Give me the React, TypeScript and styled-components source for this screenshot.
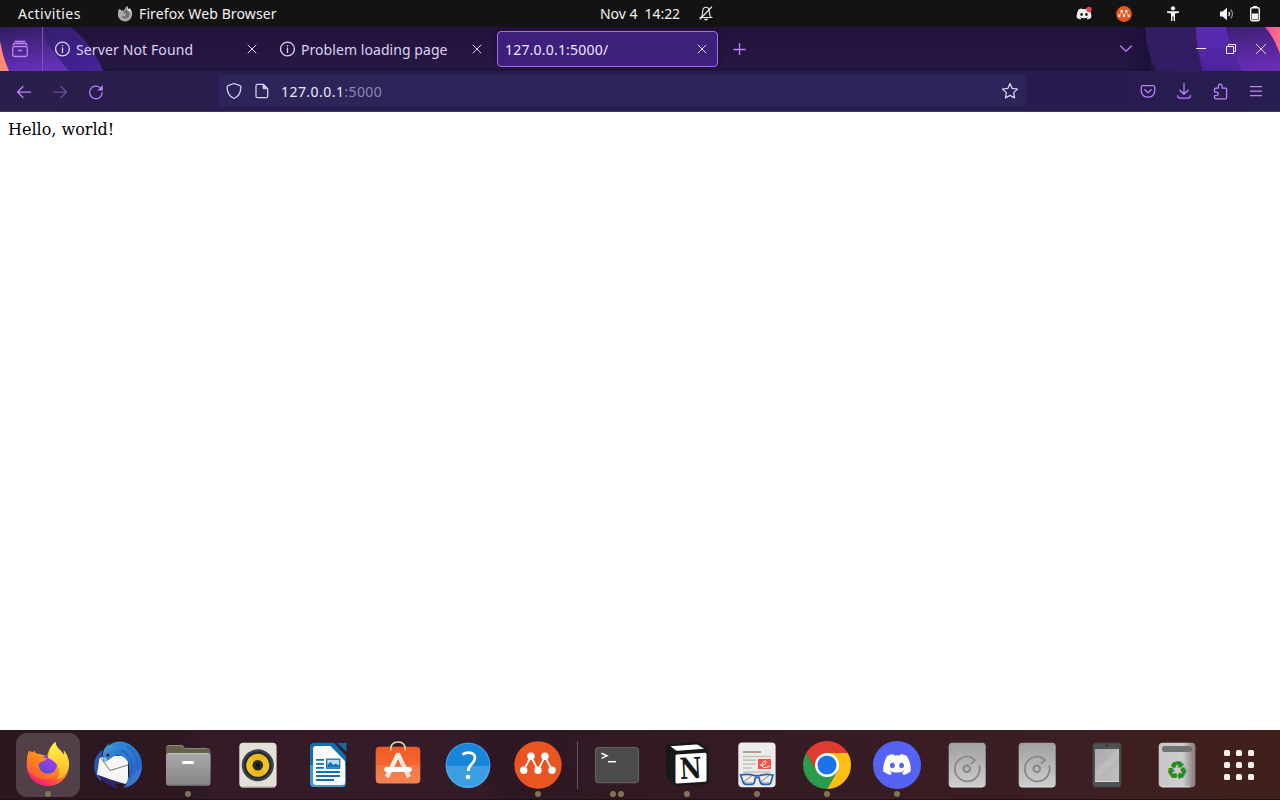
import React from 'react';
import styled, { createGlobalStyle } from 'styled-components';
import { FaDiscord } from 'react-icons/fa';

const Global = createGlobalStyle`
  * { box-sizing: border-box; }
  body { margin: 0; background: #fff; overflow: hidden; }
  svg { display: block; flex: none; }
`;

const uiFont = "'Noto Sans', 'Open Sans', sans-serif";

const Desktop = styled.div`
  width: 1280px;
  height: 800px;
  display: flex;
  flex-direction: column;
  font-family: ${uiFont};
`;

const Label = styled.span<{ $spacing?: number; $color?: string }>`
  font-size: 14px;
  letter-spacing: ${p => p.$spacing ?? 0}px;
  color: ${p => p.$color ?? '#fbfbfe'};
  white-space: pre;
  line-height: 20px;
`;

/* ---------- system bar ---------- */

const SystemBar = styled.header`
  height: 27px;
  flex: none;
  background: #131313;
  display: grid;
  grid-template-columns: 600px 1fr 218px;
  align-items: center;
`;

const SystemLeft = styled.div`
  display: flex;
  align-items: center;
  padding-left: 18px;
`;

const AppMenu = styled.div`
  display: flex;
  align-items: center;
  gap: 6px;
  margin-left: auto;
  width: 483px;
`;

const Clock = styled.div`
  display: flex;
  align-items: center;
  gap: 18.5px;
`;

const Tray = styled.div`
  display: flex;
  align-items: center;
`;

const TraySlot = styled.div<{ $width: number }>`
  width: ${p => p.$width}px;
  display: flex;
  justify-content: center;
`;

/* ---------- browser ---------- */

const TabStrip = styled.div`
  position: relative;
  isolation: isolate;
  height: 44px;
  flex: none;
  display: flex;
  align-items: center;
  background: linear-gradient(#22123a, #261744 85%, #21143c);
`;

const ThemeArt = styled.svg`
  position: absolute;
  inset: 0;
  z-index: -1;
`;

const ViewButton = styled.div`
  width: 43px;
  height: 44px;
  padding-right: 2px;
  display: flex;
  align-items: center;
  justify-content: center;
  border-right: 1px solid #7657a8;
  margin-right: 4px;
`;

const Tab = styled.div<{ $active?: boolean }>`
  width: 221px;
  height: 36px;
  margin-right: 4px;
  padding: 0 10px 0 7px;
  display: flex;
  align-items: center;
  gap: 5px;
  border: 1px solid ${p => (p.$active ? '#a96bff' : 'transparent')};
  border-radius: 4px;
  background: ${p => (p.$active ? '#3e1f7b' : 'transparent')};
  box-shadow: ${p => (p.$active ? '0 0 4px rgba(0,0,0,.4)' : 'none')};

  & > :last-child { margin-left: auto; }
  & > ${Label} { padding-top: 2px; }
`;

const NewTab = styled.div`
  padding-left: 10px;
`;

const WindowControls = styled.div`
  display: flex;
  align-items: center;
  margin-left: auto;
  padding-right: 11px;
`;

const ListTabs = styled.div`
  padding-right: 53px;
`;

const ControlSlot = styled.div`
  width: 30px;
  display: flex;
  justify-content: center;
  &:last-child { width: 16px; margin-left: 7px; }
`;

const NavBar = styled.nav`
  height: 41px;
  flex: none;
  display: flex;
  align-items: center;
  padding: 0 14px;
  border-bottom: 1px solid #40346f;
  background: linear-gradient(90deg, #2b1e4c, #281c4d 330px, #281c4e 1120px, #291e50);
`;

const NavGroup = styled.div`
  display: flex;
  align-items: center;
  gap: 16px;
  padding-top: 1px;
`;

const UrlBar = styled.div`
  width: 808px;
  height: 32px;
  margin: 0 112px;
  padding: 0 6px;
  display: flex;
  align-items: center;
  border-radius: 4px;
  background: #2d245a;

  & > :last-child { margin-left: auto; }
`;

const UrlIcon = styled.div`
  width: 20px;
  margin-right: 8px;
  display: flex;
  justify-content: center;
`;

const UrlText = styled.div`
  display: flex;
  padding: 2px 0 0 1px;
`;

const Page = styled.main`
  flex: 1;
  background: #fff;
  padding: 8px;
  font: 16px/19px 'DejaVu Serif', serif;
  color: #000;
`;

/* ---------- dock ---------- */

const Dock = styled.footer`
  height: 70px;
  flex: none;
  display: flex;
  padding-left: 13px;
  background: linear-gradient(78deg, #2b1720 0, #2d1822 15%, #351b28 17%, #341b28 37%, #2d1722 39%, #311a24 50%, #381c23 68%, #3c1f22 84%, #40201a 100%);
  border-bottom: 1px solid #241015;
`;

const DockItem = styled.div<{ $focused?: boolean }>`
  width: 64px;
  height: 64px;
  margin: 3px;
  padding-top: 8px;
  display: flex;
  flex-direction: column;
  align-items: center;
  border-radius: 11px;
  background: ${p => (p.$focused ? '#514048' : 'transparent')};
`;

const Dots = styled.div`
  display: flex;
  gap: 2.5px;
  margin-top: 2px;
`;

const Dot = styled.i`
  width: 6px;
  height: 6px;
  border-radius: 50%;
  background: #7d7557;
`;

const DockRule = styled.div`
  width: 1px;
  height: 48px;
  margin: 11px 4px 0;
  background: #655158;
`;

const AppGrid = styled.div`
  display: grid;
  grid-template-columns: repeat(3, 6px);
  grid-auto-rows: 6px;
  gap: 6px;
  margin: 20px 0 0 12px;
`;

const GridDot = styled.i`
  border-radius: 1.5px;
  background: #f2efed;
`;

/* ---------- icons ---------- */

const lilac = '#bd84fa';
const pale = '#dcd3f0';

const CloseIcon = ({ size = 10, color = '#ded5ee' }: { size?: number; color?: string }) => (
  <svg width={size} height={size} viewBox="0 0 10 10" stroke={color} strokeWidth={10 / size} strokeLinecap="round">
    <path d="M1 1l8 8M9 1l-8 8" />
  </svg>
);

const InfoIcon = () => (
  <svg width="16" height="16" viewBox="0 0 16 16" fill="none" stroke={pale} strokeWidth="1.3">
    <circle cx="7.500" cy="8" r="6.900" />
    <path d="M7.500 7v4.500" strokeLinecap="round" />
    <circle cx="7.500" cy="4.700" r=".8" fill={pale} stroke="none" />
  </svg>
);

const NavIcon = ({ children, color = lilac, dim }: { children: React.ReactNode; color?: string; dim?: boolean }) => (
  <svg width="20" height="20" viewBox="0 0 20 20" fill="none" stroke={color} strokeWidth="1.25"
    strokeLinecap="round" strokeLinejoin="round" opacity={dim ? 0.45 : 1}>{children}</svg>
);

const GrayFox = () => (
  <svg width="16" height="16" viewBox="0 0 16 16">
    <path d="M1 5L2.700 2.600 4 4.200l3 .2 1.500-3L10 0l1.200 3L13 2.400l2 4.200c.8 4.800-2.200 8.700-6.700 8.900C3.700 15.600.4 12 1 7z" fill="#a9a9a9" />
    <path d="M10 1.300c3.100 3.400 3.500 6.800 1.700 9.700-1.600 2.400-5.900 2.200-7.200-.5l3.200-.4 1.800-2.200-2.400-.6L6 5.400l2-.6z" fill="#717171" />
    <path d="M10 0l1.200 3L13 2.400l2 4.200-2.800-1.200L10 4z" fill="#e0e0e0" />
  </svg>
);

const BellOff = () => (
  <svg width="14" height="15" viewBox="0 0 14 15" fill="none" stroke="#e7e7e7" strokeWidth="1.1">
    <path d="M1.800 11.500c1.800-1 1.600-3 1.800-5.500C3.800 2.800 5 1.200 7 1.200S10.200 2.800 10.400 6c.2 2.500 0 4.500 1.800 5.500z" />
    <path d="M.8 13.400L12.900.8" strokeWidth="1.3" />
    <path d="M5 12.800h4a2 1.700 0 01-4 0z" fill="#e7e7e7" stroke="none" />
  </svg>
);

const Molecule = ({ size }: { size: number }) => (
  <svg width={size} height={size} viewBox="0 0 48 48">
    <circle cx="24" cy="24" r="23.700" fill="#e95420" />
    <path d="M9.700 29.300L17 15.300l7 14 7-14 7 14" fill="none" stroke="#fff" strokeWidth="1.800" />
    {[[9.7, 29.3], [17, 15.3], [24, 29.3], [31, 15.3], [38, 29.3]].map(([x, y]) => (
      <circle key={x} cx={x} cy={y} r="3.700" fill="#fff" />
    ))}
  </svg>
);

const Person = () => (
  <svg width="14" height="16" viewBox="0 0 14 16" fill="#f2f2f2">
    <circle cx="7" cy="2.300" r="2.100" />
    <path d="M1 5.200h12v1.500L9 7.500V15H7.600v-4.500H6.400V15H5V7.500L1 6.700z" />
  </svg>
);

const Speaker = () => (
  <svg width="16" height="14" viewBox="0 0 16 14" fill="none">
    <path d="M1 4.500h2.500L8 .7v12.600L3.500 9.500H1z" fill="#f2f2f2" />
    <path d="M9.800 4.800q1.400 2.200 0 4.400" stroke="#f2f2f2" strokeWidth="1.400" />
    <path d="M11.800 2.500q3.400 4.500 0 9" stroke="#8a8a8a" strokeWidth="1.300" />
  </svg>
);

const Battery = () => (
  <svg width="10" height="16" viewBox="0 0 10 16">
    <rect x="3" y="0" width="4" height="2" fill="#f2f2f2" />
    <rect x=".7" y="1.700" width="8.600" height="13" rx="1.500" fill="none" stroke="#f2f2f2" strokeWidth="1.400" />
    <rect x="2" y="7.500" width="6" height="6" fill="#f2f2f2" />
  </svg>
);

const Icon48 = ({ children }: { children: React.ReactNode }) => (
  <svg width="48" height="48" viewBox="0 0 48 48">{children}</svg>
);

const Firefox = () => (
  <Icon48>
    <defs>
      <linearGradient id="fxBody" x1=".85" y1=".1" x2=".3" y2=".95">
        <stop offset="0" stopColor="#fff04a" /><stop offset=".35" stopColor="#ffb22c" />
        <stop offset=".65" stopColor="#ff6a2b" /><stop offset="1" stopColor="#f5206f" />
      </linearGradient>
      <radialGradient id="fxGlobe" cx=".65" cy=".2" r=".9">
        <stop offset="0" stopColor="#a03fe8" /><stop offset="1" stopColor="#5a48d8" />
      </radialGradient>
      <linearGradient id="fxFlame" x1=".5" y1="0" x2=".6" y2="1">
        <stop offset="0" stopColor="#fff04c" /><stop offset=".6" stopColor="#ffd02f" /><stop offset="1" stopColor="#ffab2b" />
      </linearGradient>
      <linearGradient id="fxHead" x1=".8" y1="0" x2=".1" y2="1">
        <stop offset="0" stopColor="#ffa423" /><stop offset=".5" stopColor="#ff8222" /><stop offset="1" stopColor="#ff4e3c" />
      </linearGradient>
    </defs>
    <path d="M5 10l6 2 12 3C25 8 28 4 31.300 1c.5 3.500 2.500 6 5.200 8.600L40 14l-.2-4.500c3.500 4 5.400 9.500 5.200 15C44.500 36.500 35.500 45 24 45S2.700 36.500 2.700 25C2.700 19 3.500 14 5 10z" fill="url(#fxBody)" />
    <circle cx="23.700" cy="23.700" r="9.300" fill="url(#fxGlobe)" />
    <path d="M31.300 1c.5 3.500 2.500 6 5.200 8.600L40 14l-.2-4.500C45 15.500 46 23 43.800 29c-2 5.500-6.300 8.500-11 9.500 3.200-5 3-10 .7-14-2-3.500-5.500-5.500-8.300-7-1.800-1-1.900-2.500-.2-3.800C25 8.500 27.500 4 31.300 1z" fill="url(#fxFlame)" />
    <path d="M5 9.700c.4 1.800 1.300 3 2.300 3.700L10.700 9.300c.2 2.200 1 3.700 2.600 4.700 2.300.3 4 2.100 6.200 2.400l3.200.6c-.6 2.200-2.500 3.200-5 3.900-2 .6-3 1.600-3 3.300 0 5 5 9.300 10.500 8.500 4-.5 6.500-2.200 8.800-2.700-2 5-7 8.300-12.500 8.300C11.500 38.300 4.300 33 3 25c-.5-5.500.3-11 2-15.300z" fill="url(#fxHead)" />
  </Icon48>
);

const Thunderbird = () => (
  <Icon48>
    <defs>
      <linearGradient id="tbBody" x1=".3" y1="0" x2=".7" y2="1">
        <stop offset="0" stopColor="#2a8bd6" /><stop offset=".5" stopColor="#2b72d0" /><stop offset="1" stopColor="#2a53b0" />
      </linearGradient>
      <linearGradient id="tbHead" x1="0" y1="0" x2="1" y2="1">
        <stop offset="0" stopColor="#49a4e0" /><stop offset="1" stopColor="#1d62bd" />
      </linearGradient>
    </defs>
    <path d="M8 9C3 13-.5 19 .3 27c.5 6 3 10 6.700 13.500L8 18z" fill="#2a55b0" />
    <path d="M4 33.500c3 6 10 11 17 13l3.500.7-3.300-4 9.300-.7z" fill="#2d2570" />
    <path d="M3 33.500L5.500 17 12 15h22v25.500L31.500 43 18 39z" fill="#f6f6f7" />
    <path d="M6.800 17L16 29.500 34 24" fill="none" stroke="#555" strokeWidth=".8" />
    <path d="M12 6l2.500-4-.2 3C21-1.500 32-.5 38 5c6.500 5 10 12 10 20 0 11-7 20-19 22l3.500-5C36 35 35.500 28 34.500 22.500 33 17.500 28 14 23 14.500c-4 .3-6.500 3.500-11 5.500l-2 1.200C8 15.500 8.500 10 12 6z" fill="url(#tbBody)" />
    <path d="M12 6c4.500-3.500 9.500-3.500 13.500 0 2.500 2.500 2.500 5.500 1.500 8.500-5-1.500-8.500 1-11.500 3.700L10 21.200C8 15.500 8.500 10 12 6z" fill="url(#tbHead)" />
    <path d="M10 21.200l-.5-4 2-1.200 1.700 2.700z" fill="#8fc1df" />
    <circle cx="13.800" cy="14.300" r="1.700" fill="#4b4430" /><circle cx="13.800" cy="14.300" r=".9" fill="#101820" />
    <path d="M27 9c7 3 11.500 10 11 19-.2 5-1.500 9-3.500 12M33 5c7 4.500 11 12 10.500 21" fill="none" stroke="#2260bd" strokeWidth="1.100" />
    <path d="M33 42l1-6 2.500 3 1.500-8 2.500 4 1.500-8 2 4 3.500-7c.5 10-5 19.500-15.500 22.500z" fill="#3f86d9" opacity=".65" />
  </Icon48>
);

const Files = () => (
  <Icon48>
    <defs><linearGradient id="folder" x2="0" y2="1"><stop stopColor="#aaa" /><stop offset="1" stopColor="#858585" /></linearGradient></defs>
    <path d="M2 31V7q0-3 3-3h12q2 0 3 2l1 1h22q3.500 0 3.500 3v20z" fill="#65624b" />
    <path d="M3 5.500q1-1 2-1h12q2 0 3 2l1 1h22" fill="none" stroke="#8d896b" />
    <rect x="2" y="12" width="44.500" height="32.700" rx="3" fill="url(#folder)" />
    <path d="M4 12.500h40.500" stroke="#c0c0c0" /><path d="M4 44.200h40.500" stroke="#666" />
    <rect x="18" y="20" width="12" height="3" rx="1" fill="#fff" />
  </Icon48>
);

const Rhythmbox = () => (
  <Icon48>
    <rect x="5.300" y="1.700" width="37.300" height="44.800" rx="4" fill="#e4dfd7" />
    <path d="M7 46h34" stroke="#aaa59d" />
    <circle cx="23.800" cy="24.300" r="16" fill="#3b3f49" />
    <circle cx="23.800" cy="24.300" r="13.500" fill="#24262b" />
    <circle cx="23.800" cy="24.300" r="11.500" fill="#eeb914" />
    <path d="M15.700 16.200A11.500 11.500 0 0015.700 32.400L23.800 24.300zM31.900 16.200A11.500 11.500 0 0131.900 32.400L23.800 24.300z" fill="#f5d04b" opacity=".4" />
    <circle cx="23.800" cy="24.300" r="5.300" fill="#29292b" /><circle cx="23.800" cy="24.300" r="2" fill="#111" />
  </Icon48>
);

const Writer = () => (
  <Icon48>
    <path d="M10 1.700h20L42 15v27q0 4-4 4H10q-4 0-4-4V6q0-4 4-4z" fill="#106fac" />
    <path d="M6 24h36v18q0 4-4 4H10q-4 0-4-4z" fill="#3d9acb" />
    <path d="M33 2h9.500v9z" fill="#1767a0" />
    <path d="M12 5h14.500L41 20v21q0 3-3 3H12q-3 0-3-3V8q0-3 3-3z" fill="#fafafa" />
    <path d="M12 18.800h8M12 22.800h8M12 26.800h8M12 31h24M12 35h24M12 39h18" stroke="#1670ad" strokeWidth="1.800" />
    <rect x="22.700" y="18.200" width="13" height="9" fill="#bde0f4" stroke="#1670ad" strokeWidth="1.300" />
    <path d="M23.500 26.500v-3l3-2.500 3 3 2-1.500 3.500 2v2z" fill="#1670ad" />
  </Icon48>
);

const Store = () => (
  <Icon48>
    <defs><linearGradient id="bag" x2="0" y2="1"><stop stopColor="#f05a24" /><stop offset=".5" stopColor="#f4682f" /><stop offset=".51" stopColor="#f27743" /><stop offset="1" stopColor="#f3844f" /></linearGradient></defs>
    <rect x="1.700" y="5.700" width="44.600" height="36.800" rx="4" fill="url(#bag)" />
    <path d="M17 9.500C16 4 19 1 24 1s8 3 7 8.500" fill="none" stroke="#f3d4ac" strokeWidth="1.600" />
    <path d="M24.300 12.500L13 36" fill="none" stroke="#fff3ed" strokeWidth="4.300" />
    <path d="M23.700 12.500L35 36" stroke="#ffe6d9" strokeWidth="4.300" />
    <path d="M12.500 28.500h23" stroke="#fff" strokeWidth="4.800" strokeLinecap="round" />
  </Icon48>
);

const Help = () => (
  <Icon48>
    <circle cx="24" cy="24" r="22.300" fill="#1785d9" />
    <path d="M1.700 25a22.300 22.300 0 0044.600 0z" fill="#3c9ee2" />
    <circle cx="24" cy="24" r="21.800" fill="none" stroke="#60b0ea" strokeWidth=".7" />
    <path d="M18.500 13.500c4.500-3 12.500-2.500 12.500 3.500 0 5.500-6.800 6-6.800 13" fill="none" stroke="#fff" strokeWidth="2.800" />
    <circle cx="24" cy="36" r="2.300" fill="#fff" />
  </Icon48>
);

const Terminal = () => (
  <Icon48>
    <rect x="2.400" y="6.400" width="43.200" height="35.400" rx="3" fill="#4c4c4c" stroke="#737373" strokeWidth=".8" />
    <path d="M8.500 12.200l5.500 2.600-5.500 2.600" fill="none" stroke="#fff" strokeWidth="1.500" />
    <path d="M15 20.700h8" stroke="#fff" strokeWidth="1.500" />
  </Icon48>
);

const Notion = () => (
  <Icon48>
    <path d="M5 3.300L33 1q2 0 3 1l8.500 6q1 1 1 3l.3 28.500q0 3.300-3 3.500L15 45.300q-3 .3-5-2l-5.500-6Q3 35.500 3 33V6q0-2.300 2-2.700z" fill="#181818" />
    <path d="M7.500 5.300l25.500-1.800q2 0 3 1l5 3.300-26 2q-2 0-3-1z" fill="#fff" />
    <path d="M13.500 13.500l28.500-1.700q1.500 0 1.500 1.500v26q0 1.500-1.500 1.500l-28 1.700q-1.500 0-1.500-1.500V15q0-1.500 1-1.500z" fill="#fff" />
    <text x="27.700" y="37.500" fontFamily="'DejaVu Serif', serif" fontWeight="700" fontSize="29" textLength="22" lengthAdjust="spacingAndGlyphs" textAnchor="middle" fill="#181818" transform="rotate(-3 28 28)">N</text>
  </Icon48>
);

const Viewer = () => (
  <Icon48>
    <rect x="5.300" y="1.500" width="37.300" height="44.800" rx="4" fill="#ececec" />
    <path d="M10 11h18" stroke="#aaa18f" strokeWidth="2" />
    <path d="M10 15.500h28M10 19.200h13M10 23h13M10 27h9M10 31h28" stroke="#c7c1b6" strokeWidth="1.700" />
    <rect x="25" y="18" width="13" height="10" fill="#f15345" />
    <path d="M27 24c4 1 7-2 6-3.500s-4 1-4 3.500 3 3.500 8 1" fill="none" stroke="#fff" />
    <path d="M10 41.500l9-7M27 41.500l9-7M10 42h9M28 42h8" stroke="#777" strokeWidth=".9" />
    <path d="M7.500 34q7.500-1.500 14.500.7h3.500Q32 32.500 40 34l-.7 2.500L38 41q-.6 2.500-3.500 2.500h-3.700q-3 0-3.700-2.700L26 36.500h-3.500l-1 4.300q-.7 2.700-3.500 2.700h-4Q10.800 43.500 10 41l-1.500-4.500z" fill="none" stroke="#2263ae" strokeWidth="1.700" />
  </Icon48>
);

const Chrome = () => (
  <Icon48>
    <defs><clipPath id="chromeDisc"><circle cx="24" cy="24" r="24" /></clipPath></defs>
    <g clipPath="url(#chromeDisc)">
      <path d="M0 0h48v12H24L13.600 30 3 12z" fill="#df3b2f" />
      <path d="M24 12h24v36H24L34.400 30z" fill="#fcbf15" />
      <path d="M0 8l3.200 4 10.400 18L24 36l10.400-6L24 48H0z" fill="#2c9b4b" />
    </g>
    <circle cx="24" cy="24" r="12" fill="#fff" /><circle cx="24" cy="24" r="9.500" fill="#1a73e8" />
  </Icon48>
);

const Discord = () => (
  <Icon48>
    <circle cx="24" cy="24" r="24" fill="#5562f3" />
    <FaDiscord x="9" y="8.500" width="30" height="30" size={30} color="#fff" />
  </Icon48>
);

const Drive = () => (
  <Icon48>
    <defs><linearGradient id="drive" x2="0" y2="1"><stop stopColor="#a0a0a0" /><stop offset="1" stopColor="#cecece" /></linearGradient></defs>
    <rect x="5.700" y="1.700" width="37" height="44.600" rx="3.500" fill="url(#drive)" />
    <path d="M8 45.900h32" stroke="#e0e0e0" />
    <path d="M36 24a12.400 12.400 0 11-8.500-8l4.500 3-4.200 4" fill="none" stroke="#858585" strokeWidth="1.700" />
    <circle cx="23.800" cy="27.700" r="3.300" fill="none" stroke="#858585" strokeWidth="2" />
  </Icon48>
);

const Phone = () => (
  <Icon48>
    <defs><linearGradient id="glass" x2="1" y2="1"><stop stopColor="#aaa" /><stop offset="1" stopColor="#c1c1c1" /></linearGradient></defs>
    <rect x="9.800" y="1.800" width="28.400" height="44.400" rx="3" fill="#505251" stroke="#363838" strokeWidth=".7" />
    <path d="M22 4.500h4" stroke="#2d2d2d" strokeWidth="1.200" />
    <rect x="12" y="8" width="24" height="33" fill="url(#glass)" />
    <path d="M12 31L35 8h1v8L12 40z" fill="#c8c8c8" opacity=".45" />
    <path d="M12 40.500h24" stroke="#ddd" />
  </Icon48>
);

const Trash = () => (
  <Icon48>
    <defs><linearGradient id="bin"><stop stopColor="#c7c7c7" /><stop offset=".65" stopColor="#cecece" /><stop offset="1" stopColor="#857777" /></linearGradient></defs>
    <rect x="5.700" y="1.700" width="36.800" height="44.600" rx="4" fill="url(#bin)" />
    <rect x="9" y="5" width="30" height="6" rx="2.500" fill="#727272" />
    <path d="M9 45.800h28" stroke="#e2e2e2" />
    <text x="24" y="38" fontFamily="'DejaVu Sans', sans-serif" fontSize="24.5" textAnchor="middle" fill="#258d1b" stroke="#258d1b" strokeWidth=".4">♻</text>
  </Icon48>
);

type DockEntry = { icon: React.ReactNode; windows?: number; focused?: boolean };
const pinned: DockEntry[] = [
  { icon: <Firefox />, windows: 1, focused: true }, { icon: <Thunderbird /> },
  { icon: <Files />, windows: 1 }, { icon: <Rhythmbox /> }, { icon: <Writer /> },
  { icon: <Store /> }, { icon: <Help /> }, { icon: <Molecule size={48} />, windows: 1 },
];
const running: DockEntry[] = [
  { icon: <Terminal />, windows: 2 }, { icon: <Notion />, windows: 1 }, { icon: <Viewer />, windows: 1 },
  { icon: <Chrome />, windows: 1 }, { icon: <Discord />, windows: 1 },
  { icon: <Drive /> }, { icon: <Drive /> }, { icon: <Phone /> }, { icon: <Trash /> },
];

const DockApps = ({ entries }: { entries: DockEntry[] }) => (
  <>
    {entries.map((e, i) => (
      <DockItem key={i} $focused={e.focused}>
        {e.icon}
        <Dots>{Array.from({ length: e.windows ?? 0 }, (_, n) => <Dot key={n} />)}</Dots>
      </DockItem>
    ))}
  </>
);

const Art = () => (
  <ThemeArt width="1280" height="44" viewBox="0 0 1280 44">
    <defs>
      <linearGradient id="artA" x1="0" y1="0" x2=".3" y2="1"><stop stopColor="#2f1c5e" /><stop offset="1" stopColor="#6430b5" /></linearGradient>
      <linearGradient id="artB" x1="0" y1="0" x2="1" y2="1"><stop stopColor="#2e1b63" /><stop offset="1" stopColor="#48239a" /></linearGradient>
      <linearGradient id="artC" x1="0" y1="0" x2="0" y2="1"><stop stopColor="#5a2bb8" /><stop offset="1" stopColor="#4c2498" /></linearGradient>
      <linearGradient id="artD" x1="0" y1="0" x2=".2" y2="1"><stop stopColor="#3c2070" /><stop offset="1" stopColor="#672db3" /></linearGradient>
      <linearGradient id="artE"><stop stopColor="#fb479f" /><stop offset="1" stopColor="#ff7186" /></linearGradient>
      <linearGradient id="artF"><stop stopColor="#1b103a" stopOpacity="0" /><stop offset="1" stopColor="#1b103a" /></linearGradient>
    </defs>
    <path d="M0 0h71q22 18 32 44H0z" fill="url(#artB)" />
    <path d="M0 0h39q9 20 30 44H0z" fill="url(#artA)" />
    <path d="M0 14q3 17 9 30H0z" fill="#ff8a77" />
    <path d="M1120 0h30v44h-30z" fill="url(#artF)" />
    <path d="M1145 0h135v44h-124q-10-20-11-44z" fill="#331d62" />
    <path d="M1196 0h84v44h-77q-7-22-7-44z" fill="url(#artC)" />
    <path d="M1226 0h54v44h-38q-11-20-16-44z" fill="url(#artD)" />
    <path d="M1265 0h15v27q-6-17-15-27z" fill="url(#artE)" />
  </ThemeArt>
);

export default function App() {
  return (
    <Desktop>
      <Global />
      <SystemBar>
        <SystemLeft>
          <Label $color="#f2f2f2" $spacing={0.45}>Activities</Label>
          <AppMenu>
            <GrayFox />
            <Label $color="#f2f2f2" $spacing={0.12}>Firefox Web Browser</Label>
          </AppMenu>
        </SystemLeft>
        <Clock>
          <Label $color="#f2f2f2" $spacing={-0.05}>Nov 4  14:22</Label>
          <BellOff />
        </Clock>
        <Tray>
          <TraySlot $width={44}>
            <svg width="16" height="16" viewBox="0 0 16 16">
              <FaDiscord width="16" height="16" size={16} color="#eee" />
              <circle cx="13" cy="3.500" r="2.700" fill="#e8434a" />
            </svg>
          </TraySlot>
          <TraySlot $width={36}><Molecule size={16} /></TraySlot>
          <TraySlot $width={62}><Person /></TraySlot>
          <TraySlot $width={46}><Speaker /></TraySlot>
          <Battery />
        </Tray>
      </SystemBar>

      <TabStrip>
        <Art />
        <ViewButton>
          <svg width="18" height="18" viewBox="0 0 18 18" fill="none" stroke={lilac} strokeWidth="1.300" strokeLinecap="round">
            <path d="M4 1.500h10M2 5q.3-1.500 2-1.500h10q1.700 0 2 1.500" />
            <rect x="1.700" y="6.500" width="14.600" height="10" rx="1.800" />
            <path d="M7.500 10.500h3" />
          </svg>
        </ViewButton>
        <Tab><InfoIcon /><Label $color={pale} $spacing={0.12}>Server Not Found</Label><CloseIcon /></Tab>
        <Tab><InfoIcon /><Label $color={pale} $spacing={0.06}>Problem loading page</Label><CloseIcon /></Tab>
        <Tab $active><Label $color="#eee6fb" $spacing={0.2}>127.0.0.1:5000/</Label><CloseIcon /></Tab>
        <NewTab>
          <svg width="14" height="14" viewBox="0 0 14 14" stroke={lilac} strokeWidth="1.300"><path d="M7.500 1v12M1.500 7.500h12" /></svg>
        </NewTab>
        <WindowControls>
          <ListTabs>
            <svg width="14" height="14" viewBox="0 0 14 14" fill="none" stroke={lilac} strokeWidth="1.300" strokeLinecap="round"><path d="M1.500 4L7 9.200 12.500 4" /></svg>
          </ListTabs>
          <ControlSlot><svg width="10" height="12"><path d="M0 5.500h10" stroke="#f0e9ff" /></svg></ControlSlot>
          <ControlSlot>
            <svg width="10" height="10" fill="none" stroke="#f0e9ff"><path d="M.5 2.500h7v7h-7zM2.500 2.500v-2h7v7h-2" /></svg>
          </ControlSlot>
          <ControlSlot><CloseIcon size={12} /></ControlSlot>
        </WindowControls>
      </TabStrip>

      <NavBar>
        <NavGroup>
          <NavIcon><path d="M3.500 10h13M9 4.500L3.500 10 9 15.500" /></NavIcon>
          <NavIcon dim><path d="M3.500 10h13M11 4.500l5.500 5.500-5.500 5.500" /></NavIcon>
          <NavIcon>
            <path d="M16.200 10.500A6.300 6.300 0 1114 5.600l1.500 1.600" />
            <path d="M16.500 3.800v4.400h-4.400z" fill={lilac} strokeWidth=".5" />
          </NavIcon>
        </NavGroup>
        <UrlBar>
          <UrlIcon>
            <NavIcon color={pale}><path d="M10 2.500l6 2.200c1 .4 1 1 .9 1.800-.3 5-2.900 9.500-6.900 11-4-1.500-6.600-6-6.900-11 0-.8 0-1.400.9-1.800z" /></NavIcon>
          </UrlIcon>
          <UrlIcon>
            <NavIcon color={pale}>
              <path d="M5.500 3.300h5.700l4.500 4.500v7.400q0 1.500-1.500 1.500H5.500Q4 16.700 4 15.200V4.800q0-1.500 1.500-1.500z" />
              <path d="M11 3.500v4.300h4.500z" fill={pale} strokeWidth=".8" />
            </NavIcon>
          </UrlIcon>
          <UrlText>
            <Label $color="#efe8fa" $spacing={0.45}>127.0.0.1</Label><Label $color="#8f87ac" $spacing={0.4}>:5000</Label>
          </UrlText>
          <NavIcon color={pale}><path d="M10 2.500l2.200 4.900 5.300.6-3.900 3.600 1 5.300L10 14.400l-4.600 2.500 1-5.300L2.500 8l5.300-.6z" /></NavIcon>
        </UrlBar>
        <NavGroup>
          <NavIcon><path d="M4.500 3.500h11q1.200 0 1.200 1.200V9c0 8.300-13.400 8.300-13.400 0V4.700q0-1.200 1.200-1.200z" /><path d="M6.800 7.700l3.200 3 3.200-3" /></NavIcon>
          <NavIcon><path d="M10 1.500V12M5.800 8.200L10 12.300l4.200-4.100M3.800 13.500v.5q0 2 2 2h8.400q2 0 2-2v-.5" /></NavIcon>
          <NavIcon><path d="M4.500 8.500V7.200q0-1.200 1.200-1.200h2.700V4.400c0-3.200 3.700-3.200 3.700 0V6h3.200q1.300 0 1.300 1.200v8.300q0 1.300-1.300 1.300H5.700q-1.200 0-1.200-1.300V13.600h1.700c2.700 0 2.700-3.600 0-3.600H4.500z" /></NavIcon>
          <NavIcon><path d="M4.500 4.500h11M4.500 9h11M4.500 13.500h11" /></NavIcon>
        </NavGroup>
      </NavBar>

      <Page>Hello, world!</Page>

      <Dock>
        <DockApps entries={pinned} />
        <DockRule />
        <DockApps entries={running} />
        <AppGrid>{Array.from({ length: 9 }, (_, i) => <GridDot key={i} />)}</AppGrid>
      </Dock>
    </Desktop>
  );
}
